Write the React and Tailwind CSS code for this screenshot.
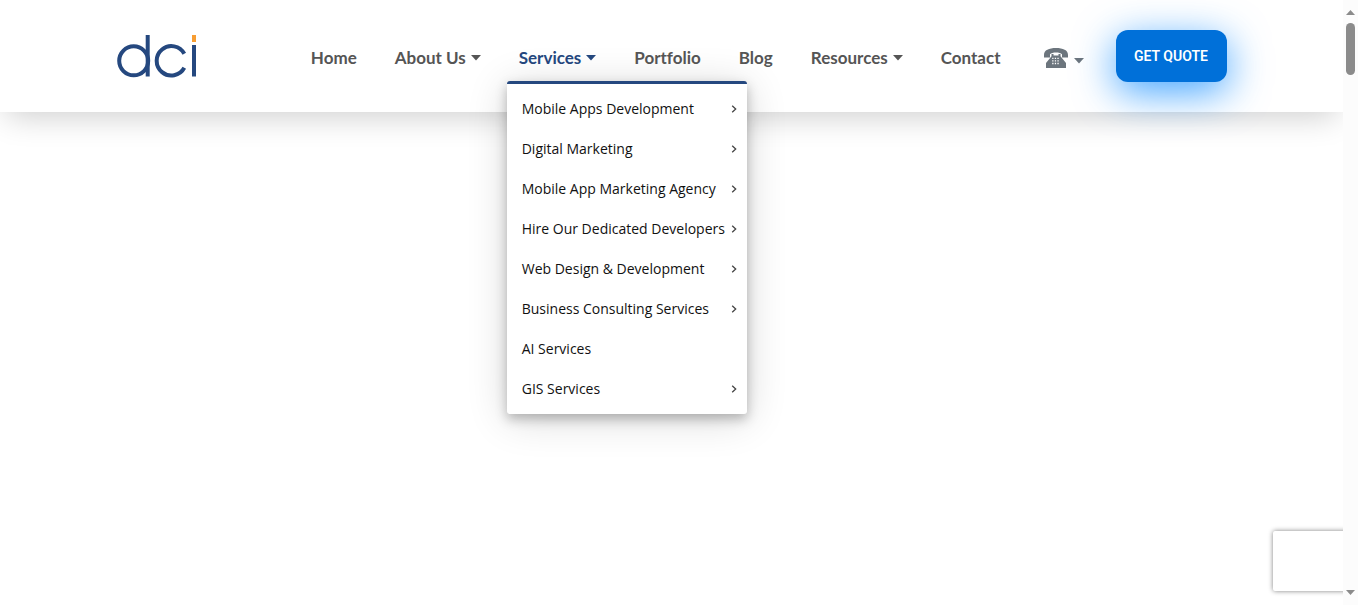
import React from "react";

const services = [
  { label: "Mobile Apps Development", nested: true },
  { label: "Digital Marketing", nested: true },
  { label: "Mobile App Marketing Agency", nested: true },
  { label: "Hire Our Dedicated Developers", nested: true },
  { label: "Web Design & Development", nested: true },
  { label: "Business Consulting Services", nested: true },
  { label: "AI Services", nested: false },
  { label: "GIS Services", nested: true },
];

const links = [
  { label: "Home" },
  { label: "About Us", caret: true },
  { label: "Services", caret: true, open: true },
  { label: "Portfolio" },
  { label: "Blog" },
  { label: "Resources", caret: true },
  { label: "Contact" },
];

function Caret() {
  return (
    <svg viewBox="0 0 10 6" className="h-[6px] w-[10px]" fill="currentColor" aria-hidden="true">
      <path d="M0 0h10L5 5.500z" />
    </svg>
  );
}

function Logo() {
  return (
    <svg viewBox="0 0 80 44" className="h-[44px] w-[80px]" role="img" aria-label="dci">
      <g fill="none" stroke="#25487f" strokeWidth="4">
        <circle cx="16.700" cy="26.800" r="14.500" />
        <path d="M30.700 1v41.500" />
        <path d="M67.300 19.800A14.700 14.700 0 1 0 67.300 33.800" />
        <path d="M77 11v31.500" />
      </g>
      <path d="M75 1h4v7h-4z" fill="#f79d32" />
    </svg>
  );
}

function Phone() {
  return (
    <svg viewBox="0 0 24 20" className="h-[20px] w-[24px]" aria-hidden="true">
      <path fill="#6c757d" d="M0 9.500V7C0 2 5 0 12 0s12 2 12 7v2.500h-6V6.300C16 3.800 8 3.800 6 6.300v3.200z" />
      <path fill="#6c757d" d="M7.500 6h2v1.500h5V6h2v2.200L22 15v5H2v-5l5.500-6.800z" />
      <path stroke="#fff" strokeWidth="1.300" strokeDasharray="1.300 1.300" d="M8.200 10.300h7.400M8.200 12.900h7.400M8.200 15.500h7.400" />
    </svg>
  );
}

function ServicesMenu() {
  return (
    <ul className="absolute -left-3 top-[35px] w-[240px] rounded-[3px] border-t-[3px] border-[#25487f] bg-white py-[5px] font-['Open_Sans',sans-serif] font-normal shadow-[0_5px_12px_rgba(0,0,0,0.25),0_5px_40px_rgba(0,0,0,0.16)]">
      {services.map((item) => (
        <li key={item.label}>
          <a href="#" className="flex h-10 items-center justify-between pl-[15px] pr-[10px] text-[14px] leading-5 whitespace-nowrap text-[#111]">
            {item.label}
            {item.nested && (
              <svg viewBox="0 0 6 8" className="h-2 w-[6px]" fill="none" stroke="#444" strokeWidth="1.300" aria-hidden="true">
                <path d="M1.200 0.700L4.700 4L1.200 7.300" />
              </svg>
            )}
          </a>
        </li>
      ))}
    </ul>
  );
}

export default function App() {
  return (
    <div className="flex h-screen overflow-hidden bg-white font-['Lato','Open_Sans',sans-serif]">
      <div className="relative min-w-0 flex-1 overflow-hidden">
        <header className="bg-white shadow-[0_10px_30px_-6px_rgba(0,0,0,0.2)]">
          <div className="mx-auto flex h-28 max-w-[1140px] items-center justify-between px-[15px]">
            <a href="#">
              <Logo />
            </a>
            <div className="flex items-center">
              <nav className="flex gap-[38px] pt-1">
                {links.map((link) => (
                  <div key={link.label} className="relative text-[17px] leading-6 font-bold [font-variant-ligatures:none]">
                    <a href="#" className={link.open ? "flex items-center gap-[5px] whitespace-nowrap text-[#25487f]" : "flex items-center gap-[5px] whitespace-nowrap text-[#555]"}>
                      {link.label}
                      {link.caret && <Caret />}
                    </a>
                    {link.open && <ServicesMenu />}
                  </div>
                ))}
              </nav>
              <button type="button" aria-label="Call us" className="ml-[43px] flex items-center gap-[6px] pt-1 text-[#6c757d]">
                <Phone />
                <span className="pt-[6px]">
                  <Caret />
                </span>
              </button>
              <a href="#" className="ml-8 flex h-[52px] w-[111px] items-center justify-center rounded-xl bg-[#0070d9] font-['Roboto',sans-serif] text-[14px] font-semibold whitespace-nowrap text-white shadow-[0_10px_40px_rgba(0,132,255,0.75)]">
                GET QUOTE
              </a>
            </div>
          </div>
        </header>
        <div className="absolute -right-[186px] bottom-[14px] h-[60px] w-[256px] rounded-[2px] bg-white shadow-[0_0_5px_#808080]" />
      </div>
      <div aria-hidden="true" className="flex w-[15px] flex-col items-center bg-[#fcfcfc] pt-[10px] pb-[10px]">
        <svg viewBox="0 0 9 5" className="h-[5px] w-[9px]" fill="#8b8b8b">
          <path d="M0 5h9L4.500 0z" />
        </svg>
        <div className="mt-2 h-[52px] w-[9px] rounded-full bg-[#8b8b8b]" />
        <svg viewBox="0 0 9 5" className="mt-auto h-[5px] w-[9px]" fill="#8b8b8b">
          <path d="M0 0h9L4.500 5z" />
        </svg>
      </div>
    </div>
  );
}
